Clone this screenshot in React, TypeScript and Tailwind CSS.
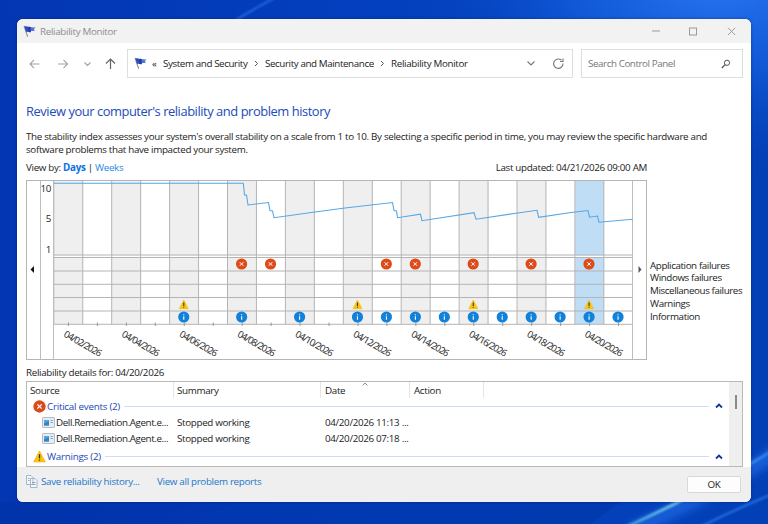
import { useState } from 'react';

const COL = 28.95;
const LEFT = 28;

const colCenter = (i: number) => LEFT + COL * (i + 0.5);

const critical = [6, 7, 11, 12, 14, 16, 18];
const warnings = [4, 10, 14, 18];
const info = [4, 6, 8, 10, 11, 12, 13, 14, 15, 16, 17, 18, 19];
const dates = ['04/02/2026', '04/04/2026', '04/06/2026', '04/08/2026', '04/10/2026', '04/12/2026', '04/14/2026', '04/16/2026', '04/18/2026', '04/20/2026'];
const categories = ['Application failures', 'Windows failures', 'Miscellaneous failures', 'Warnings', 'Information'];
const events = [
  { source: 'Dell.Remediation.Agent.e...', summary: 'Stopped working', date: '04/20/2026 11:13 ...' },
  { source: 'Dell.Remediation.Agent.e...', summary: 'Stopped working', date: '04/20/2026 07:18 ...' },
];

const FlagIcon = () => (
  <svg width="13" height="13" viewBox="0 0 13 13" className="shrink-0">
    <path d="M.5 1.2 1.800.8 5.200 11.500l-1 .4Z" fill="#8b93a3" />
    <path d="M1.500 1.400C3.600.6 5 2.500 6.800 1.600L8 6.800C6 8 4.800 5.900 3 7Z" fill="#2c4cc0" />
    <path d="M6.300 2.700c1.800-1.300 3.600.4 6.200-.7L11 3.900l.8 1.700C9.800 6.600 8.700 5.600 6.800 6.600Z" fill="#5474dc" />
    <path d="M5.300 2.200 7.800 2 7.400 7.400 5.900 6.700Z" fill="#2036a0" />
  </svg>
);

const ErrorIcon = ({ size = 12 }: { size?: number }) => (
  <svg width={size} height={size} viewBox="0 0 12 12" className="shrink-0">
    <circle cx="6" cy="6" r="5.7" fill="#dc4a1b" />
    <path d="m4 4 4 4M8 4 4 8" stroke="#fff" strokeWidth="1.1" />
  </svg>
);

const WarningIcon = ({ size = 11 }: { size?: number }) => (
  <svg width={size} height={size} viewBox="0 0 12 12" className="shrink-0">
    <path d="M6 .9 11.4 11H.6Z" fill="#fcc40f" stroke="#f0b000" strokeWidth=".6" strokeLinejoin="round" />
    <path d="M6 4v3.8M6 8.8v1.2" stroke="#3c3010" strokeWidth="1.2" />
  </svg>
);

const AppIcon = () => (
  <svg width="13" height="11" viewBox="0 0 13 11" className="shrink-0">
    <rect x=".5" y=".5" width="12" height="10" rx=".6" fill="#e6ecf1" stroke="#b4bcc4" />
    <rect x="2" y="3" width="5" height="5.500" fill="#5ba3da" />
    <path d="M2 6.500 7 4v4.500H2Z" fill="#3583bf" />
    <path d="M8.500 3.500H11M8.500 5.500H11" stroke="#8fa9bf" />
  </svg>
);

const Wallpaper = () => (
  <svg width="768" height="524" className="absolute inset-0">
    <defs>
      <linearGradient id="base" x1="0" y1="0" x2="1" y2="0">
        <stop offset="0" stopColor="#0336b3" />
        <stop offset=".5" stopColor="#0340bf" />
        <stop offset="1" stopColor="#0340b6" />
      </linearGradient>
      <radialGradient id="glow" gradientUnits="userSpaceOnUse" cx="720" cy="-20" r="330" gradientTransform="matrix(1 0 0 .6 0 -8)">
        <stop offset="0" stopColor="#2a76f2" />
        <stop offset=".45" stopColor="#1561e0" stopOpacity=".75" />
        <stop offset="1" stopColor="#0440bf" stopOpacity="0" />
      </radialGradient>
      <linearGradient id="streak" gradientUnits="userSpaceOnUse" x1="630" y1="0" x2="768" y2="0">
        <stop offset="0" stopColor="#3f9be0" />
        <stop offset=".3" stopColor="#6cc4e6" />
        <stop offset="1" stopColor="#2f7df0" />
      </linearGradient>
      <filter id="soft" x="-20%" y="-20%" width="140%" height="140%">
        <feGaussianBlur stdDeviation="1" />
      </filter>
      <filter id="softer" x="-20%" y="-20%" width="140%" height="140%">
        <feGaussianBlur stdDeviation="5" />
      </filter>
    </defs>
    <rect width="768" height="524" fill="url(#base)" />
    <rect width="768" height="524" fill="url(#glow)" />
    <path d="M0 502H620L590 524H0Z" fill="#002e9c" opacity=".35" />
    <g fill="none">
      <path d="M628 532Q720 492 780 450" stroke="#1b62dc" strokeWidth="12" filter="url(#softer)" />
      <path d="M236 20Q262 4 286-8" stroke="#2c77e8" strokeWidth="1.500" filter="url(#soft)" />
      <path d="M624 528Q720 484 780 446" stroke="url(#streak)" strokeWidth="3" filter="url(#soft)" />
      <path d="M700 527Q740 507 780 491" stroke="#2b78ea" strokeWidth="1.800" filter="url(#soft)" />
    </g>
  </svg>
);

const StabilityChart = () => (
  <svg width="621" height="181" viewBox="0 0 621 181" className="block shrink-0">
    {Array.from({ length: 20 }, (_, i) => (
      i % 2 === 0 && (
        <rect key={i} x={LEFT + i * COL} y="0" width={COL} height="144" fill={i === 18 ? '#bfddf5' : '#efefef'} />
      )
    ))}
    <rect x={LEFT} y="75.500" width={COL * 20} height="2" fill="#fff" />
    <g stroke="#b4b4b4" strokeWidth="1" fill="none">
      {Array.from({ length: 20 }, (_, i) => (
        <path key={i} d={`M${LEFT + i * COL - 0.2} 0V144`} />
      ))}
      <path d="M27.500 0V179M606.500 0V179M14.500 0V179" stroke="#bdbdbd" />
      <path d="M28 75H606M28 77.500H606M28 91H606M28 104.300H606M28 117.500H606M28 131H606M28 144.300H606" />
      {Array.from({ length: 20 }, (_, i) => (
        <path key={i} d={`M${colCenter(i)} 142.500V146`} stroke="#999" />
      ))}
      <rect x=".5" y=".5" width="620" height="179" stroke="#b5b5b5" />
    </g>
    <polyline
      points="28,3.300 217.300,3.300 218.500,15 220.500,15 222,25 242.500,22.500 244,30.500 246.500,31 248,37.700 289,32 319,28 366.500,22.500 368,30.500 370.500,31 371.500,37.700 394.500,34.200 396,40.700 448,32.700 450,39.200 490,33.200 511,30.300 512.700,37.300 545,32.500 562,30.500 563.500,37.200 571.500,36 573,42.200 606.500,39.200"
      fill="none"
      stroke="#56a7e4"
      strokeWidth="1.100"
    />
    <g fontSize="9.800" fill="#222" textAnchor="end">
      <text x="25" y="11.500">10</text>
      <text x="25" y="42">5</text>
      <text x="25" y="72.500">1</text>
    </g>
    <path d="M4.500 89.500 8 86v7Z" fill="#111" />
    <path d="M615.500 89.500 612.500 86v7Z" fill="#555" />
    {critical.map((c) => (
      <g key={c} transform={`translate(${colCenter(c) - 0.6} 84)`}>
        <circle r="5.600" fill="#de4a18" />
        <path d="m-1.800-1.800 3.600 3.600M1.800-1.800-1.800 1.800" stroke="#fff" strokeWidth="1" />
      </g>
    ))}
    {warnings.map((c) => (
      <g key={c} transform={`translate(${colCenter(c) - 0.5} 124.500)`}>
        <path d="M0-4.500 4.500 4.200H-4.500Z" fill="#fdc60c" stroke="#f3b70b" strokeWidth=".6" strokeLinejoin="round" />
        <path d="M0-2V1.500M0 2.300V3.300" stroke="#473a10" strokeWidth="1.100" />
      </g>
    ))}
    {info.map((c) => (
      <g key={c} transform={`translate(${colCenter(c) - 0.5} 137)`}>
        <circle r="5.600" fill="#1181da" />
        <path d="M0-2.800V-1.700M0-.8V2.800" stroke="#fff" strokeWidth="1.100" />
      </g>
    ))}
    <g fontSize="9.500" fill="#222" letterSpacing="0">
      {dates.map((date, i) => (
        <text key={date} transform={`translate(${LEFT + 9 + i * COL * 2} 156) rotate(30)`} textLength="42">
          {date}
        </text>
      ))}
    </g>
  </svg>
);

const GroupRow = ({ label, children }: { label: string; children: React.ReactNode }) => (
  <div className="flex h-[17px] items-center pl-[6px] pr-[6px]">
    {children}
    <span className="ml-[1px] tracking-[-0.25px] text-[#2146b5]">{label}</span>
    <div className="ml-1 mr-[6px] h-px flex-1 bg-[#cfdcf4]" />
    <svg width="8" height="6" viewBox="0 0 8 6">
      <path d="m1 4.500 3-3 3 3" fill="none" stroke="#123a9e" strokeWidth="1.800" />
    </svg>
  </div>
);

const App = () => {
  const [view, setView] = useState('Days');
  const [search, setSearch] = useState('');

  return (
    <div className="relative h-[524px] w-[768px] overflow-hidden pl-[17px] pt-[19px] font-['Open_Sans','Noto_Sans',sans-serif] text-[9.8px] leading-[13px] tracking-[-0.32px] text-[#222]">
      <Wallpaper />
      <div className="relative flex h-[483px] w-[734px] flex-col overflow-hidden rounded-[6px] bg-white shadow-[0_0_3px_rgba(0,20,90,0.5)]">
        {/* Title bar */}
        <div className="flex h-6 shrink-0 items-center bg-[#f2f2f2] pl-[6px] pr-[14px] text-[#8d8d8d]">
          <FlagIcon />
          <span className="ml-1 flex-1">Reliability Monitor</span>
          <svg width="86" height="9" viewBox="0 0 86 9" fill="none" stroke="#9a9a9a">
            <path d="M1 4H9" />
            <rect x="38.500" y="1" width="7" height="7" />
            <path d="m77 .8 7.200 7.200M84.200.8 77 8" />
          </svg>
        </div>

        {/* Navigation */}
        <div className="mb-px flex h-[41px] shrink-0 items-center pl-3 pr-2">
          <svg width="90" height="14" viewBox="0 0 90 14" fill="none" stroke="#a3a3a3" strokeWidth="1.100">
            <path d="M10.500 7H1M5 2.800 1 7l4 4.200M29 7H38.500M34.500 2.800 38.500 7l-4 4.200M55.500 5.500 58.500 8.500 61.500 5.500" />
            <path d="M81.500 12V2M77 6.500 81.500 2 86 6.500" stroke="#666" strokeWidth="1.200" />
          </svg>
          <div className="ml-[8px] flex h-[29px] w-[446px] items-center border border-[#dedede] pl-[6px] pr-[8px]">
            <FlagIcon />
            <span className="ml-[5px] w-[11px]">«</span>
            <span className="w-[85px] whitespace-nowrap tracking-[-0.4px]">System and Security</span>
            <svg width="17" height="7" className="shrink-0"><path d="m7 1 2.500 2.500L7 6" fill="none" stroke="#555" /></svg>
            <span className="w-[109px] whitespace-nowrap tracking-[-0.4px]">Security and Maintenance</span>
            <svg width="17" height="7" className="shrink-0"><path d="m7 1 2.500 2.500L7 6" fill="none" stroke="#555" /></svg>
            <span className="flex-1">Reliability Monitor</span>
            <svg width="42" height="13" viewBox="0 0 42 13" fill="none" stroke="#777" strokeWidth="1.100">
              <path d="m5.500 4.500 3.500 3.500L12.500 4.500M39.500 3.200A4.700 4.700 0 1 0 41 6.500M41 1.500V4.500H38" />
            </svg>
          </div>
          <div className="ml-2 flex h-[29px] w-[162px] items-center border border-[#dedede] pl-[6px] pr-[11px]">
            <input
              value={search}
              onChange={(e) => setSearch(e.target.value)}
              placeholder="Search Control Panel"
              className="w-0 flex-1 tracking-[-0.42px] outline-none placeholder:text-[#767676]"
            />
            <svg width="10" height="10" viewBox="0 0 10 10" fill="none" stroke="#555">
              <circle cx="6" cy="3.800" r="2.600" />
              <path d="M4.200 5.600.8 9" strokeWidth="1.300" />
            </svg>
          </div>
        </div>

        {/* Content */}
        <div className="flex flex-1 flex-col px-[9px] pt-[18px]">
          <h1 className="h-[16px] text-[12.9px] leading-[16px] tracking-[-0.44px] text-[#204bb8]">Review your computer&apos;s reliability and problem history</h1>
          <p className="mt-[11px] whitespace-nowrap">
            The stability index assesses your system&apos;s overall stability on a scale from 1 to 10. By selecting a specific period in time, you may review the specific hardware and
            <br />
            software problems that have impacted your system.
          </p>
          <div className="mt-[5px] flex h-[13px] w-[621px] justify-between">
            <div>
              View by:{' '}
              <button onClick={() => setView('Days')} className={view === 'Days' ? 'font-bold text-[#0b70e4]' : 'text-[#2b86e6]'}>Days</button>
              {' '}|{' '}
              <button onClick={() => setView('Weeks')} className={view === 'Weeks' ? 'font-bold text-[#0b70e4]' : 'text-[#2b86e6]'}>Weeks</button>
            </div>
            <span>Last updated: 04/21/2026 09:00 AM</span>
          </div>
          <div className="mt-[6px] flex">
            <StabilityChart />
            <div className="pl-[3px] pt-[79.5px] leading-[12.95px]">
              {categories.map((c) => (
                <div key={c} className="whitespace-nowrap tracking-[-0.4px]">{c}</div>
              ))}
            </div>
          </div>
          <div className="mt-[5px] h-[13px]">Reliability details for: 04/20/2026</div>

          {/* Event list */}
          <div className="mt-[2px] flex h-[86px] w-[717px] overflow-hidden border border-[#b9b9b9]">
            <div className="flex-1">
              <div className="flex h-[16px] items-center pl-[3px]">
                <div className="h-full w-[144px] border-r border-[#e5e5e5] leading-[17px]">Source</div>
                <div className="h-full w-[147px] border-r border-[#e5e5e5] pl-[3px] leading-[17px]">Summary</div>
                <div className="flex h-full w-[89px] border-r border-[#e5e5e5] pl-1 leading-[17px]">
                  Date
                  <svg width="6" height="4" className="ml-[17px]"><path d="m.5 3.500 2.500-2.500 2.500 2.500" fill="none" stroke="#777" strokeWidth=".8" /></svg>
                </div>
                <div className="h-full w-[74px] border-r border-[#e5e5e5] pl-1 leading-[17px]">Action</div>
              </div>
              <div className="-mt-[0.5px]">
                <GroupRow label="Critical events (2)"><ErrorIcon size={13} /></GroupRow>
                {events.map((e) => (
                  <div key={e.date} className="flex h-[16px] items-center pl-[15px]">
                    <AppIcon />
                    <span className="ml-[1px] w-[121px] whitespace-nowrap tracking-[-0.4px]">{e.source}</span>
                    <span className="w-[148px]">{e.summary}</span>
                    <span className="whitespace-nowrap">{e.date}</span>
                  </div>
                ))}
                <div className="pt-[1.5px]">
                  <GroupRow label="Warnings (2)"><WarningIcon size={13} /></GroupRow>
                </div>
              </div>
            </div>
            <div className="flex w-[13px] justify-center bg-[#efefef] pt-[13px]">
              <div className="h-[14px] w-[2px] bg-[#8a8a8a]" />
            </div>
          </div>
        </div>

        {/* Footer */}
        <div className="flex h-[35px] shrink-0 items-center bg-[#efefef] pl-[9px] pr-[10px] text-[#2276cc]">
          <svg width="12" height="13" viewBox="0 0 12 13" className="mb-[6px]" fill="#f4f8fc" stroke="#a6b6c6">
            <path d="M.5.5H5L7 2.500V9.500H.5ZM4.500 3.500H9L11 5.500V12.500H4.500Z" />
            <path d="M6 7.500H9.500M6 9.500H9.500M2 3.500H3.500M2 5.500H3.500" stroke="#7faad0" />
          </svg>
          <span className="mb-[6px] ml-[3px] w-[116px]">Save reliability history...</span>
          <span className="mb-[6px] flex-1">View all problem reports</span>
          <button className="h-[17px] w-[54px] rounded-[2px] border border-[#d8d8d8] bg-[#fdfdfd] text-[#222]">OK</button>
        </div>
      </div>
    </div>
  );
};

export default App;
